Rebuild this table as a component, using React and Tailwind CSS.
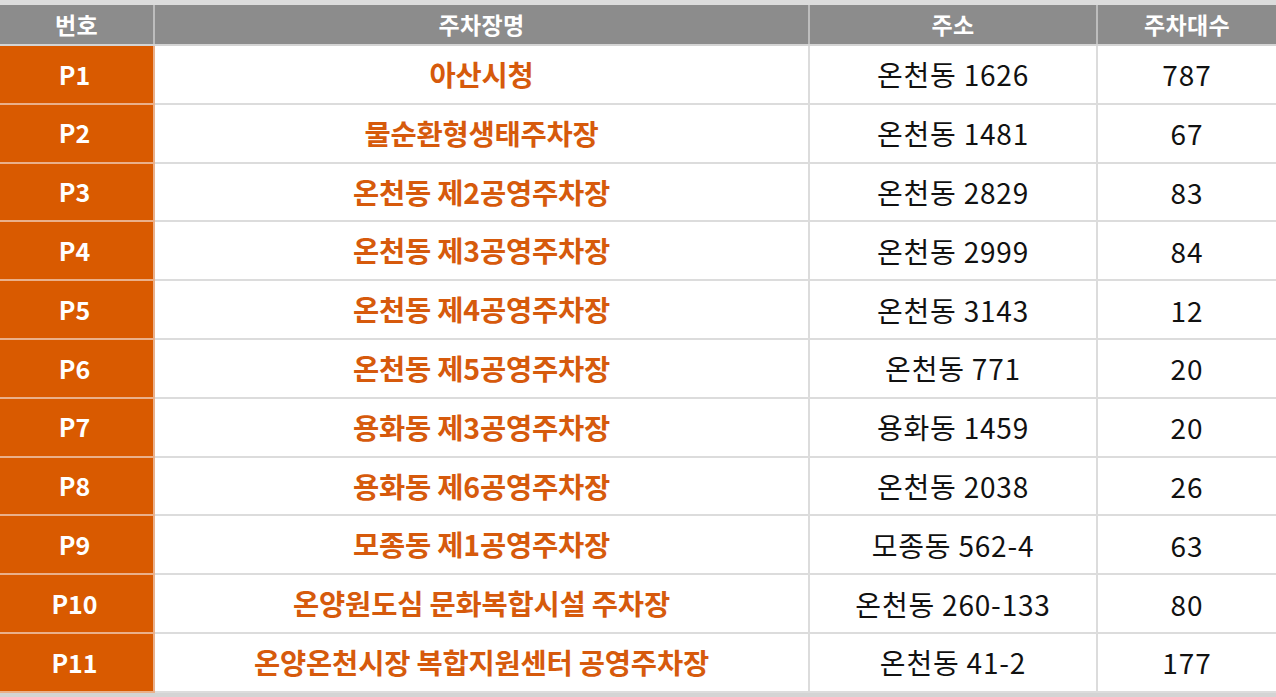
import React from "react";

const rows = [
  ["P1", "아산시청", "온천동 1626", "787"],
  ["P2", "물순환형생태주차장", "온천동 1481", "67"],
  ["P3", "온천동 제2공영주차장", "온천동 2829", "83"],
  ["P4", "온천동 제3공영주차장", "온천동 2999", "84"],
  ["P5", "온천동 제4공영주차장", "온천동 3143", "12"],
  ["P6", "온천동 제5공영주차장", "온천동 771", "20"],
  ["P7", "용화동 제3공영주차장", "용화동 1459", "20"],
  ["P8", "용화동 제6공영주차장", "온천동 2038", "26"],
  ["P9", "모종동 제1공영주차장", "모종동 562-4", "63"],
  ["P10", "온양원도심 문화복합시설 주차장", "온천동 260-133", "80"],
  ["P11", "온양온천시장 복합지원센터 공영주차장", "온천동 41-2", "177"],
];

const font = { fontFamily: '"Noto Sans CJK KR", "Noto Sans", sans-serif' };

export default function App() {
  return (
    <div className="w-[1276px] h-[697px] bg-white flex flex-col overflow-hidden" style={font}>
      <div className="h-[5px] bg-[#dcdcdc]" />
      <div className="flex h-[41px] bg-[#8c8c8c] border-b-2 border-[#d4d4d4] text-white font-bold text-[23px] tracking-[0.3px]">
        <div className="w-[155px] border-r-2 border-[#bdbdbd] flex items-center justify-center">번호</div>
        <div className="w-[655px] border-r-2 border-[#bdbdbd] flex items-center justify-center">주차장명</div>
        <div className="w-[288px] border-r-2 border-[#bdbdbd] flex items-center justify-center">주소</div>
        <div className="flex-1 flex items-center justify-center">주차대수</div>
      </div>
      {rows.map((r, i) => (
        <div key={i} className="flex h-[58.8px] shrink-0">
          <div className="w-[155px] bg-[#d95a00] border-r-2 border-b-2 border-[#eab08a] flex items-center justify-center text-white font-bold text-[25px] pr-[4px]">
            {r[0]}
          </div>
          <div className="w-[655px] border-r-2 border-b-2 border-[#dcdcdc] flex items-center justify-center text-[#d65a0c] font-bold text-[28.5px] tracking-[-0.2px]">
            {r[1]}
          </div>
          <div className="w-[288px] border-r-2 border-b-2 border-[#dcdcdc] flex items-center justify-center text-[#111] text-[28px] tracking-[0.8px]">
            {r[2]}
          </div>
          <div className="flex-1 border-b-2 border-[#dcdcdc] flex items-center justify-center text-[#111] text-[28px] tracking-[1px]">
            {r[3]}
          </div>
        </div>
      ))}
      <div className="flex-1 bg-[#d4d4d4]" />
    </div>
  );
}
